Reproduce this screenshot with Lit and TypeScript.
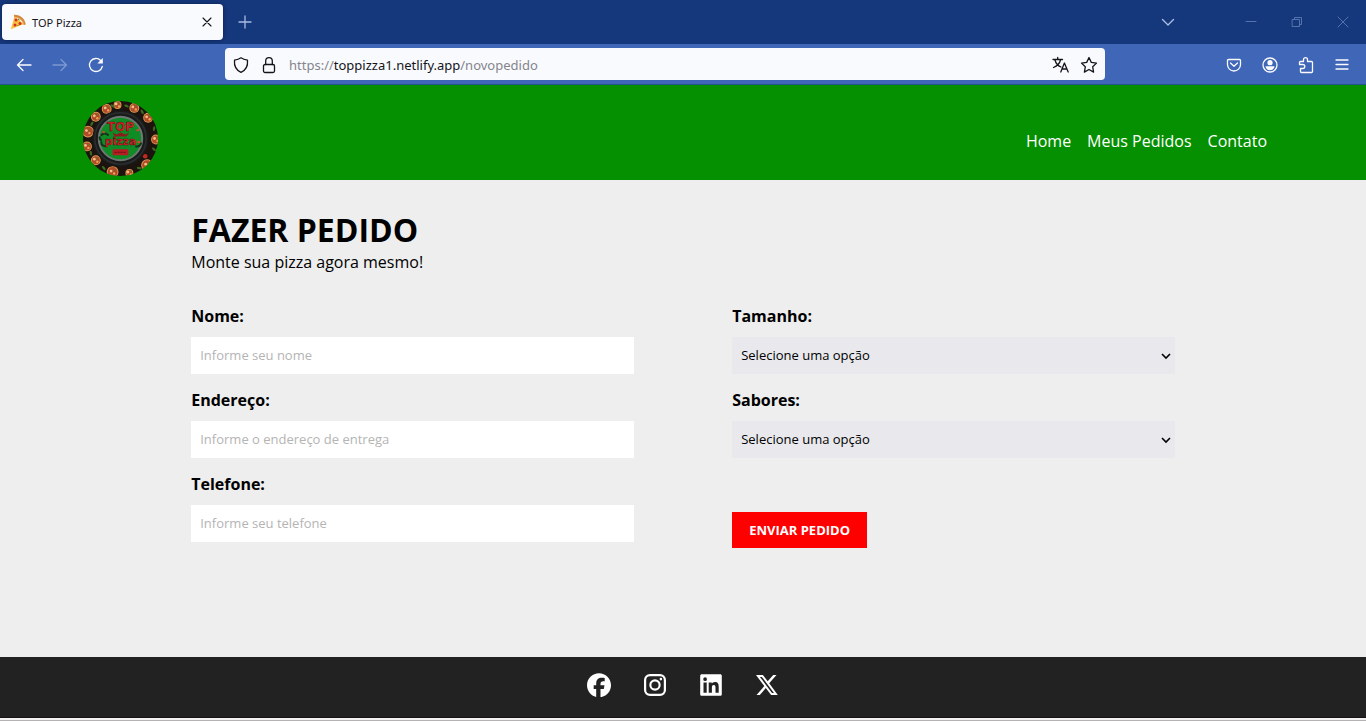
import { LitElement, html, css, svg } from "lit";
import { customElement, property } from "lit/decorators.js";

const slices = [
  [35, 4, 4], [52, 7, 5], [66, 17, 5], [74, 39, 5], [65, 65, 6], [47, 73, 4],
  [30, 72, 6], [13, 60, 5], [4, 46, 5], [5, 31, 6], [13, 16, 5], [24, 8, 5],
];
const leaves = [[44, 5, 20], [60, 11, 60], [72, 28, 100], [72, 49, 40], [57, 68, 10], [21, 68, 50], [8, 53, 80], [9, 23, 120], [30, 5, 30]];

@customElement("pizza-logo")
export class PizzaLogo extends LitElement {
  static styles = css`
    :host { display: block; }
    svg { display: block; width: 75px; height: 75px; }
    .script { font: 700 12px "DejaVu Sans", sans-serif; fill: #e0222c; stroke: #5a0c10; stroke-width: 0.5px; }
    .wide { font-size: 11px; }
  `;
  render() {
    return html`<svg viewBox="0 0 76 76" role="img" aria-label="TOP Pizza">
      <defs><clipPath id="disc"><circle cx="38" cy="38" r="38"/></clipPath></defs>
      <circle cx="38" cy="38" r="38" fill="#1c130f"/>
      <g clip-path="url(#disc)">
        ${slices.map(([x, y, r]) => svg`<g transform="translate(${x} ${y})">
          <circle r=${r} fill="#dc9a52"/><circle r=${r - 1} fill="#b04a28"/>
          <circle cx="-1.500" cy="-1" r="1.400" fill="#f3c184"/><circle cx="1.500" cy="1.500" r="1.200" fill="#e9a457"/><circle cx="1.500" cy="-2" r=".8" fill="#5c7a2a"/></g>`)}
        ${leaves.map(([x, y, a]) => svg`<ellipse cx=${x} cy=${y} rx="2.500" ry="1.200" fill="#3c6b20" transform="rotate(${a} ${x} ${y})"/>`)}
        <circle cx="63" cy="56" r="2.300" fill="#c02a20"/>
      </g>
      <circle cx="38" cy="38" r="28.500" fill="#191b1b"/>
      <circle cx="38" cy="38" r="26" fill="none" stroke="#2c2e2e" stroke-width="1.500"/>
      <circle cx="38" cy="38" r="22" fill="#0f8c26" stroke="#707876" stroke-width="2"/>
      <path d="M18 35q4-4 8 0M19 41q-2 4 4 5M53 46q5 1 6-4M17 36q-1 3 2 4" fill="none" stroke="#17321a" stroke-width="2"/>
      <path d="M30 32l4 2 4-2 5 2 4-2-3 4H32z" fill="#8e1a1c"/>
      <text class="script" x="38" y="30" text-anchor="middle">TOP</text>
      <text class="script wide" x="38" y="45" text-anchor="middle">pizza</text>
      <rect x="30" y="49" width="16" height="6" rx="1" fill="#b51d22"/>
      <path d="M32 52h12" stroke="#5b0f12" stroke-dasharray="2 1"/>
      <path d="M20 31l2 1M54 30l3-1M55 41l3 1" stroke="#cf4a26" stroke-width="2"/>
    </svg>`;
  }
}

const glyphs: Record<string, unknown> = {
  close: svg`<path d="M4 4l8 8M12 4l-8 8"/>`,
  plus: svg`<path d="M8 2v12M2 8h12"/>`,
  back: svg`<path d="M15 8H1.500M7 2.500L1.500 8 7 13.500"/>`,
  forward: svg`<path d="M1 8h13.500M9 2.500L14.500 8 9 13.500"/>`,
  reload: svg`<path d="M14.300 9.500A6.500 6.500 0 1 1 12.700 3.500L14 5"/><path d="M14.800 1v5.500h-5.500z" fill="currentColor" stroke="none"/>`,
  shield: svg`<path d="M8 .8C6 2.200 4 2.800 1.500 3.200 1 8.500 2.500 12.800 8 15.300c5.500-2.500 7-6.800 6.500-12.100C12 2.800 10 2.200 8 .8z"/>`,
  lock: svg`<rect x="2.500" y="7.500" width="11" height="8" rx="1.500"/><path d="M4.700 7.500V4a3.300 3.300 0 0 1 6.600 0v3.500"/>`,
  translate: svg`<path d="M0 2.500h9.500M4.700 .5v2M2 3c.8 3.500 3 5.700 6 7M7.500 3C6.700 6.500 4 9 .5 10.500M7.800 15l3.600-9 3.800 9M9 12h5"/>`,
  star: svg`<path d="M8 .5l2.300 4.900 5.200.7-3.800 3.700.9 5.300L8 12.500l-4.600 2.600.9-5.300L.5 6.100l5.200-.7z"/>`,
  chevron: svg`<path d="M2.500 5.500L8 11l5.500-5.500"/>`,
  minimise: svg`<path d="M3 7.500h10"/>`,
  restore: svg`<path d="M3.500 5.500h7v7h-7zM5.500 5.500v-2h7v7h-2"/>`,
  shut: svg`<path d="M3 3l10 10M13 3L3 13"/>`,
  pocket: svg`<path d="M2.500 2.500h11a1 1 0 0 1 1 1V7.500a6.500 6.500 0 0 1-13 0V3.500a1 1 0 0 1 1-1zM4.500 6L8 9.300 11.500 6"/>`,
  account: svg`<circle cx="8" cy="8" r="7"/><circle cx="8" cy="5.700" r="2.600" fill="currentColor" stroke="none"/><path d="M3.500 9.300h9c-.3 2.500-2 3.900-4.500 3.900s-4.200-1.400-4.500-3.900z" fill="currentColor" stroke="none"/>`,
  puzzle: svg`<path d="M5.500 4.500V2.700a2 2 0 0 1 4 0v1.800h4a1 1 0 0 1 1 1v9a1 1 0 0 1-1 1h-10a1 1 0 0 1-1-1v-3h2.300a2 2 0 0 0 0-4H1.500v-2a1 1 0 0 1 1-1z"/>`,
  menu: svg`<path d="M2 3h12M2 7.500h12M2 12h12"/>`,
};

@customElement("line-icon")
export class LineIcon extends LitElement {
  @property() name = "";
  static styles = css`
    :host { display: block; }
    svg { display: block; width: 16px; height: 16px; overflow: visible; fill: none; stroke: currentColor; stroke-width: var(--stroke, 1.3px); stroke-linejoin: round; stroke-linecap: round; }
  `;
  render() {
    return html`<svg viewBox="0 0 16 16" aria-hidden="true">${glyphs[this.name]}</svg>`;
  }
}

@customElement("browser-bar")
export class BrowserBar extends LitElement {
  static styles = css`
    :host { display: block; font-family: "Noto Sans", "Open Sans", sans-serif; }
    button { border: 0; padding: 0; background: none; color: inherit; display: grid; place-items: center; }
    .tabs { display: flex; align-items: center; height: 44px; background: #15377c; color: #a9bce2; }
    .tab { display: flex; align-items: center; gap: 6px; width: 221px; height: 36px; margin-left: 2px; padding: 0 8px; box-sizing: border-box; border-radius: 4px; background: #f9fafe; color: #15141a; font-size: 11px; box-shadow: 0 0 4px rgb(0 0 0 / 40%); --stroke: 1.1px; }
    .tab svg { width: 16px; height: 16px; }
    .title { flex: 1; line-height: 16px; padding-top: 1px; }
    .new { margin-left: 14px; }
    .window { display: flex; gap: 30px; margin-left: auto; padding-right: 15px; color: #5673ae; --stroke: 1px; }
    .list { margin-right: 37px; color: #a9bce2; --stroke: 1.4px; }
    .tools { display: flex; align-items: center; height: 40px; background: #3f66b7; border-bottom: 1px solid #24558a; color: #fbfbfe; }
    .nav { display: flex; gap: 20px; width: 225px; padding: 1px 0 0 16px; box-sizing: border-box; }
    .off { color: #7d98d0; }
    .address { display: flex; align-items: center; gap: 12px; flex: 1; height: 32px; padding: 1px 8px 0; box-sizing: border-box; border-radius: 4px; background: #f9fafe; color: #15141a; }
    .url { flex: 1; padding-top: 1px; font-size: 13px; line-height: 18px; color: #85858c; white-space: nowrap; }
    .url b { font-weight: 400; color: #15141a; }
    .extras { display: flex; gap: 20px; justify-content: flex-end; width: 261px; padding: 1px 16px 0 0; box-sizing: border-box; }
  `;
  render() {
    const tool = (name: string, label: string, cls = "") =>
      html`<button type="button" class=${cls} aria-label=${label}><line-icon name=${name}></line-icon></button>`;
    return html`
      <div class="tabs">
        <div class="tab">
          <svg viewBox="0 0 16 16" aria-hidden="true">
            <path d="M4.500 2.500L14 10 .8 15.300z" fill="#f9c23c"/>
            <path d="M4 .8C10 .5 15 4.500 15.800 10.500l-1.800.6C13 6.500 9.500 3.500 4 3z" fill="#d3883e"/>
            <path d="M4 3c5 .3 8.800 3 10 8" fill="none" stroke="#f3a64f"/>
            <circle cx="6" cy="6" r="1.500" fill="#d3302f"/><circle cx="10" cy="9.500" r="1.500" fill="#d3302f"/><circle cx="5" cy="11" r="1.500" fill="#d3302f"/><path d="M8 5l1.500 1M7.500 12l1-1" stroke="#4e8a2e"/>
          </svg>
          <span class="title">TOP Pizza</span>
          ${tool("close", "Fechar aba")}
        </div>
        ${tool("plus", "Nova aba", "new")}
        <div class="window">
          ${tool("chevron", "Listar abas", "list")}${tool("minimise", "Minimizar")}${tool("restore", "Restaurar")}${tool("shut", "Fechar")}
        </div>
      </div>
      <div class="tools">
        <div class="nav">${tool("back", "Voltar")}${tool("forward", "Avançar", "off")}${tool("reload", "Recarregar")}</div>
        <div class="address">
          <line-icon name="shield"></line-icon><line-icon name="lock"></line-icon>
          <span class="url">https://<b>toppizza1.netlify.app</b>/novopedido</span>
          ${tool("translate", "Traduzir")}${tool("star", "Favoritar")}
        </div>
        <div class="extras">${tool("pocket", "Pocket")}${tool("account", "Conta")}${tool("puzzle", "Extensões")}${tool("menu", "Menu")}</div>
      </div>`;
  }
}

const socials = [
  ["Facebook", "M12 .3C5.400 .3 0 5.700 0 12.300c0 5.700 3.900 10.400 9.200 11.700v-8H6.700v-3.700h2.500v-1.600c0-4.100 1.900-6 5.900-6 .8 0 2.100.1 2.600.3V8.300c-.3 0-.8 0-1.400 0-2 0-2.800.8-2.800 2.700v1.300h4l-.7 3.700h-3.300v8.200C19.400 23.500 24 18.400 24 12.300 24 5.700 18.600.3 12 .3z"],
  ["Instagram", "M7 1h10a6 6 0 0 1 6 6v10a6 6 0 0 1-6 6H7a6 6 0 0 1-6-6V7a6 6 0 0 1 6-6zM7 3.200A3.800 3.800 0 0 0 3.200 7v10A3.800 3.800 0 0 0 7 20.800h10a3.800 3.800 0 0 0 3.800-3.800V7A3.800 3.800 0 0 0 17 3.200zM12 6.300a5.700 5.700 0 1 1 0 11.400 5.700 5.700 0 0 1 0-11.400zM12 8.400a3.600 3.600 0 1 0 0 7.200 3.600 3.600 0 0 0 0-7.200zM17.900 4.800a1.300 1.300 0 1 1 0 2.600 1.300 1.300 0 0 1 0-2.600z"],
  ["LinkedIn", "M2.800 1.200h18.400c.9 0 1.600.7 1.600 1.600v18.400c0 .9-.7 1.600-1.600 1.600H2.800c-.9 0-1.600-.7-1.600-1.600V2.800c0-.9.7-1.600 1.600-1.600zM4.500 9.400v10.300h3.200V9.400zM6.100 4.300a1.850 1.850 0 1 0 0 3.700 1.850 1.850 0 0 0 0-3.700zM9.700 9.400v10.300h3.200v-5.100c0-1.400.3-2.700 1.900-2.700 1.700 0 1.700 1.500 1.700 2.700v5.100h3.200V14c0-2.800-.6-4.900-3.800-4.900-1.600 0-2.600.8-3.100 1.700V9.400z"],
  ["X", "M18.200 2h3.300l-7.300 8.300L22.800 22h-6.700l-5.300-6.900L4.800 22H1.500l7.800-8.900L1 2h6.900l4.800 6.300zM17 20h1.900L6.900 3.900h-2z"],
];

@customElement("app-root")
export class AppRoot extends LitElement {
  static styles = css`
    :host { display: flex; flex-direction: column; min-height: 100vh; background: #eee; color: #000; font: 16px/22px "Open Sans", sans-serif; }
    header { background: #049000; }
    .inner { display: flex; justify-content: space-between; align-items: flex-start; max-width: 1200px; margin: 0 auto; padding: 16px 0 4px; }
    nav { display: flex; gap: 16px; padding: 29px 16px 0 0; }
    nav a { color: #fff; text-decoration: none; }
    main { flex: 1; width: 72%; margin: 0 auto; padding: 28px 0 0; }
    h1 { margin: 0; font-size: 32px; line-height: 44px; }
    .lead { margin: 0; line-height: 20px; }
    form { display: grid; grid-template-columns: 45% 45%; justify-content: space-between; margin-top: 33px; }
    .column { display: flex; flex-direction: column; align-items: flex-start; gap: 15px; }
    .field { display: flex; flex-direction: column; gap: 10px; width: 100%; }
    label { font-weight: 700; }
    input, select { width: 100%; height: 37px; box-sizing: border-box; padding: 0 9px 1px; border: 0; border-radius: 0; background: #fff; color: #000; font: 13px/18px "Open Sans", sans-serif; }
    input::placeholder { color: #b4b4b4; opacity: 1; }
    .pick { display: grid; align-items: center; }
    .pick > * { grid-area: 1 / 1; }
    select { appearance: none; background: #e9e9ed; }
    .arrow { justify-self: end; width: 10px; height: 10px; margin-right: 4px; pointer-events: none; fill: none; stroke: #000; stroke-width: 1.6px; }
    .send { margin-top: 39px; height: 36px; padding: 0 17px; border: 0; background: #f00; color: #fff; font: 700 13px/18px "Open Sans", sans-serif; }
    footer { display: flex; justify-content: center; gap: 32px; padding: 16px 0 21px; background: #222; border-bottom: 2px solid #f4f2f2; box-shadow: inset 0 -1px #161616; }
    footer a { color: #fff; }
    footer svg { display: block; width: 24px; height: 24px; fill: currentColor; fill-rule: evenodd; }
    .edge { height: 1px; background: #b4b2b3; }
  `;
  private text(id: string, label: string, hint: string, type = "text") {
    return html`<div class="field"><label for=${id}>${label}</label><input id=${id} type=${type} placeholder=${hint}></div>`;
  }
  private choice(id: string, label: string) {
    return html`<div class="field"><label for=${id}>${label}</label>
      <div class="pick"><select id=${id}><option>Selecione uma opção</option></select>
      <svg class="arrow" viewBox="0 0 10 10" aria-hidden="true"><path d="M1 3l4 4 4-4"/></svg></div></div>`;
  }
  render() {
    return html`
      <browser-bar></browser-bar>
      <header><div class="inner">
        <pizza-logo></pizza-logo>
        <nav><a href="#home">Home</a><a href="#pedidos">Meus Pedidos</a><a href="#contato">Contato</a></nav>
      </div></header>
      <main>
        <h1>FAZER PEDIDO</h1>
        <p class="lead">Monte sua pizza agora mesmo!</p>
        <form>
          <div class="column">
            ${this.text("nome", "Nome:", "Informe seu nome")}
            ${this.text("endereco", "Endereço:", "Informe o endereço de entrega")}
            ${this.text("telefone", "Telefone:", "Informe seu telefone", "tel")}
          </div>
          <div class="column">
            ${this.choice("tamanho", "Tamanho:")}
            ${this.choice("sabores", "Sabores:")}
            <button class="send" type="button">ENVIAR PEDIDO</button>
          </div>
        </form>
      </main>
      <footer>${socials.map(([name, d]) => html`<a href="#social" aria-label=${name}><svg viewBox="0 0 24 24" aria-hidden="true"><path d=${d}></path></svg></a>`)}</footer>
      <div class="edge"></div>`;
  }
}
